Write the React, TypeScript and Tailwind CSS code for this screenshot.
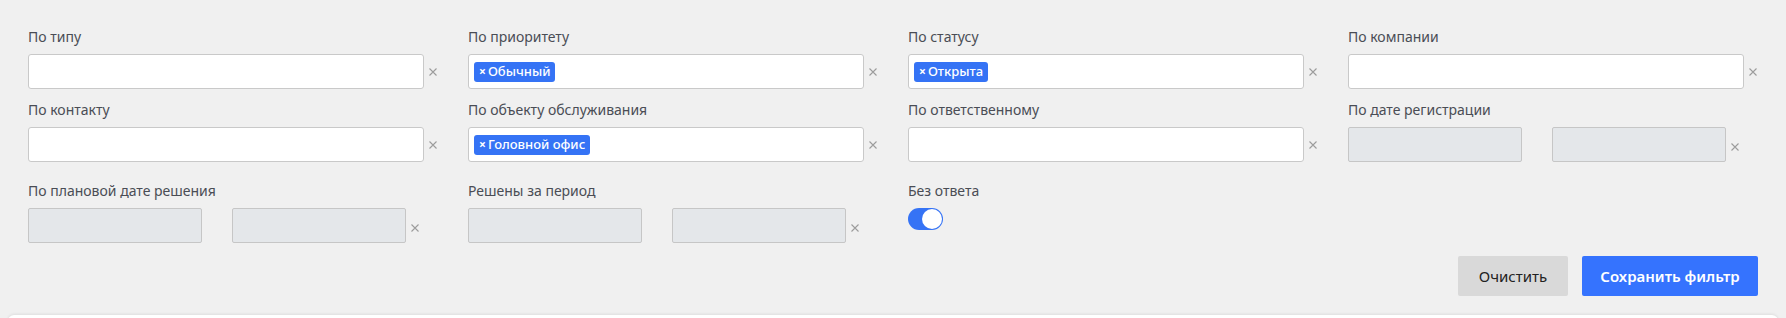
import React from "react";

const X = () => (
  <svg width="8" height="8" viewBox="0 0 8 8" className="shrink-0">
    <path d="M0.5 0.5L7.5 7.5M7.5 0.5L0.5 7.5" stroke="#9c9c9c" strokeWidth="1.1" />
  </svg>
);

const Label = ({ children }: { children: React.ReactNode }) => (
  <div className="text-[14px] leading-[20px] text-[#4a4d55] mb-[7px]">{children}</div>
);

const Tag = ({ text }: { text: string }) => (
  <span className="inline-flex items-center h-[20px] px-[5px] rounded-[3px] bg-[#3573f5] text-white text-[13px] font-medium leading-none">
    <span className="text-[12px] font-bold mr-[2px]">×</span>
    {text}
  </span>
);

const TextField = ({ label, tag }: { label: string; tag?: string }) => (
  <div>
    <Label>{label}</Label>
    <div className="flex items-center">
      <div className="w-[396px] h-[35px] bg-white border border-[#c9c9c9] rounded-[3px] flex items-center px-[5px]">
        {tag && <Tag text={tag} />}
      </div>
      <div className="ml-[5px] flex">
        <X />
      </div>
    </div>
  </div>
);

const DateField = ({ label, className = "" }: { label: string; className?: string }) => (
  <div className={className}>
    <Label>{label}</Label>
    <div className="flex h-[40px] items-start">
      <div className="w-[174px] h-[35px] bg-[#e4e7ea] border border-[#c6c6c6] rounded-[2px]" />
      <div className="w-[174px] h-[35px] ml-[30px] bg-[#e4e7ea] border border-[#c6c6c6] rounded-[2px]" />
      <div className="ml-[5px] self-center flex">
        <X />
      </div>
    </div>
  </div>
);

export default function App() {
  return (
    <div className="w-[1786px] h-[318px] bg-[#f0f0f0] overflow-hidden flex flex-col font-['Noto_Sans',sans-serif]">
      <div className="pt-[27px] px-[28px] grid grid-cols-[440px_440px_440px_1fr] gap-y-[11px] items-start">
        <TextField label="По типу" />
        <TextField label="По приоритету" tag="Обычный" />
        <TextField label="По статусу" tag="Открыта" />
        <TextField label="По компании" />

        <TextField label="По контакту" />
        <TextField label="По объекту обслуживания" tag="Головной офис" />
        <TextField label="По ответственному" />
        <DateField label="По дате регистрации" />

        <DateField label="По плановой дате решения" className="mt-[3px]" />
        <DateField label="Решены за период" className="mt-[3px]" />
        <div className="mt-[3px]">
          <Label>Без ответа</Label>
          <div className="w-[35px] h-[22px] rounded-full bg-[#3573f5] flex items-center justify-end p-[1px]">
            <div className="w-[20px] h-[20px] rounded-full bg-white" />
          </div>
        </div>
        <div />
      </div>
      <div className="flex justify-end gap-[14px] pr-[28px] mt-[8px]">
        <button className="w-[110px] h-[40px] rounded-[2px] bg-[#d9d9d9] text-[#222] text-[15px]">
          Очистить
        </button>
        <button className="w-[176px] h-[40px] rounded-[2px] bg-[#3573fe] text-white text-[15px] font-semibold">
          Сохранить фильтр
        </button>
      </div>
      <div className="mt-[19px] mx-[8px] h-[10px] shrink-0 bg-white rounded-t-[6px] shadow-[0_-1px_3px_rgba(0,0,0,0.08)]" />
    </div>
  );
}
